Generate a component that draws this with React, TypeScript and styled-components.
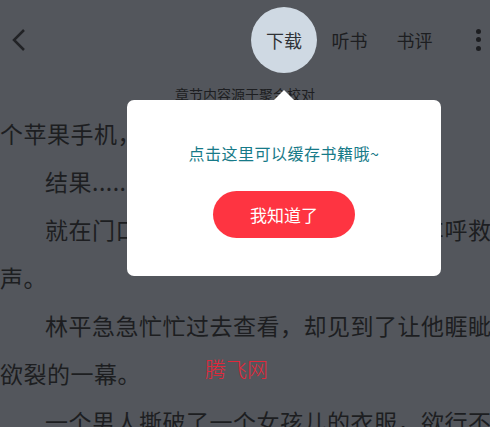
import styled, { createGlobalStyle } from "styled-components";

const GlobalStyle = createGlobalStyle`
  html, body {
    margin: 0;
    padding: 0;
    background: #53565c;
  }
  body {
    font-family: "Noto Sans CJK SC", "Noto Sans", sans-serif;
    overflow: hidden;
  }
`;

const Screen = styled.div`
  position: relative;
  width: 490px;
  height: 427px;
  overflow: hidden;
  background: #53565c;
  color: #1d1e21;
`;

const Header = styled.header`
  display: flex;
  align-items: center;
  height: 79px;
`;

const BackButton = styled.button`
  display: flex;
  align-items: center;
  margin-left: 12px;
  padding: 0;
  border: 0;
  background: none;
  color: #222326;
`;

const Tabs = styled.nav`
  display: flex;
  align-items: center;
  margin-left: auto;
`;

const Tab = styled.div<{ $active?: boolean }>`
  display: flex;
  align-items: center;
  justify-content: center;
  width: ${(p) => (p.$active ? "66px" : "65px")};
  height: 66px;
  border-radius: 50%;
  background: ${(p) => (p.$active ? "#cfd9e3" : "transparent")};
  color: ${(p) => (p.$active ? "#2f3236" : "#1d1e21")};
  font-size: 18px;
`;

const More = styled.div`
  display: flex;
  flex-direction: column;
  align-items: flex-end;
  gap: 3.5px;
  width: 34px;
  padding-right: 9px;
  span {
    width: 5px;
    height: 5px;
    border-radius: 50%;
    background: #1d1e21;
  }
`;

const Notice = styled.div`
  height: 30px;
  line-height: 30px;
  text-align: center;
  font-size: 14px;
  color: #1d1e21;
`;

const Line = styled.p<{ $indent?: boolean }>`
  margin: 0;
  height: 48px;
  line-height: 48px;
  white-space: nowrap;
  font-size: 23px;
  letter-spacing: 0.5px;
  padding-left: ${(p) => (p.$indent ? "45px" : "0")};
`;

const Watermark = styled.div`
  position: absolute;
  left: 205px;
  top: 353px;
  font-size: 21px;
  font-weight: 300;
  color: #e2283b;
`;

const Popup = styled.div`
  position: absolute;
  left: 127px;
  top: 100px;
  width: 314px;
  height: 176px;
  box-sizing: border-box;
  padding-top: 40px;
  display: flex;
  flex-direction: column;
  align-items: center;
  background: #fff;
  border-radius: 7px;

  &::before {
    content: "";
    position: absolute;
    left: 146px;
    top: -10px;
    border-left: 11px solid transparent;
    border-right: 11px solid transparent;
    border-bottom: 11px solid #fff;
  }
`;

const Tip = styled.div`
  font-size: 16px;
  line-height: 26px;
  color: #177a88;
  letter-spacing: 0.5px;
`;

const GotIt = styled.button`
  margin-top: 25px;
  width: 142px;
  height: 47px;
  border: 0;
  border-radius: 24px;
  background: #fe3441;
  color: #fff;
  font-family: inherit;
  font-size: 17px;
`;

export default function App() {
  return (
    <Screen>
      <GlobalStyle />
      <Header>
        <BackButton>
          <svg width="14" height="22" viewBox="0 0 14 22">
            <polyline
              points="12,1 2,11 12,21"
              fill="none"
              stroke="currentColor"
              strokeWidth="2.5"
            />
          </svg>
        </BackButton>
        <Tabs>
          <Tab $active>下载</Tab>
          <Tab>听书</Tab>
          <Tab>书评</Tab>
          <More>
            <span />
            <span />
            <span />
          </More>
        </Tabs>
      </Header>
      <Notice>章节内容源于聚合校对</Notice>
      <Line>个苹果手机，</Line>
      <Line $indent>结果......</Line>
      <Line $indent>就在门口，他听到了巷子里停着一辆车呼救</Line>
      <Line>声。</Line>
      <Line $indent>林平急急忙忙过去查看，却见到了让他睚眦</Line>
      <Line>欲裂的一幕。</Line>
      <Line $indent>一个男人撕破了一个女孩儿的衣服，欲行不</Line>
      <Watermark>腾飞网</Watermark>
      <Popup>
        <Tip>点击这里可以缓存书籍哦~</Tip>
        <GotIt>我知道了</GotIt>
      </Popup>
    </Screen>
  );
}
